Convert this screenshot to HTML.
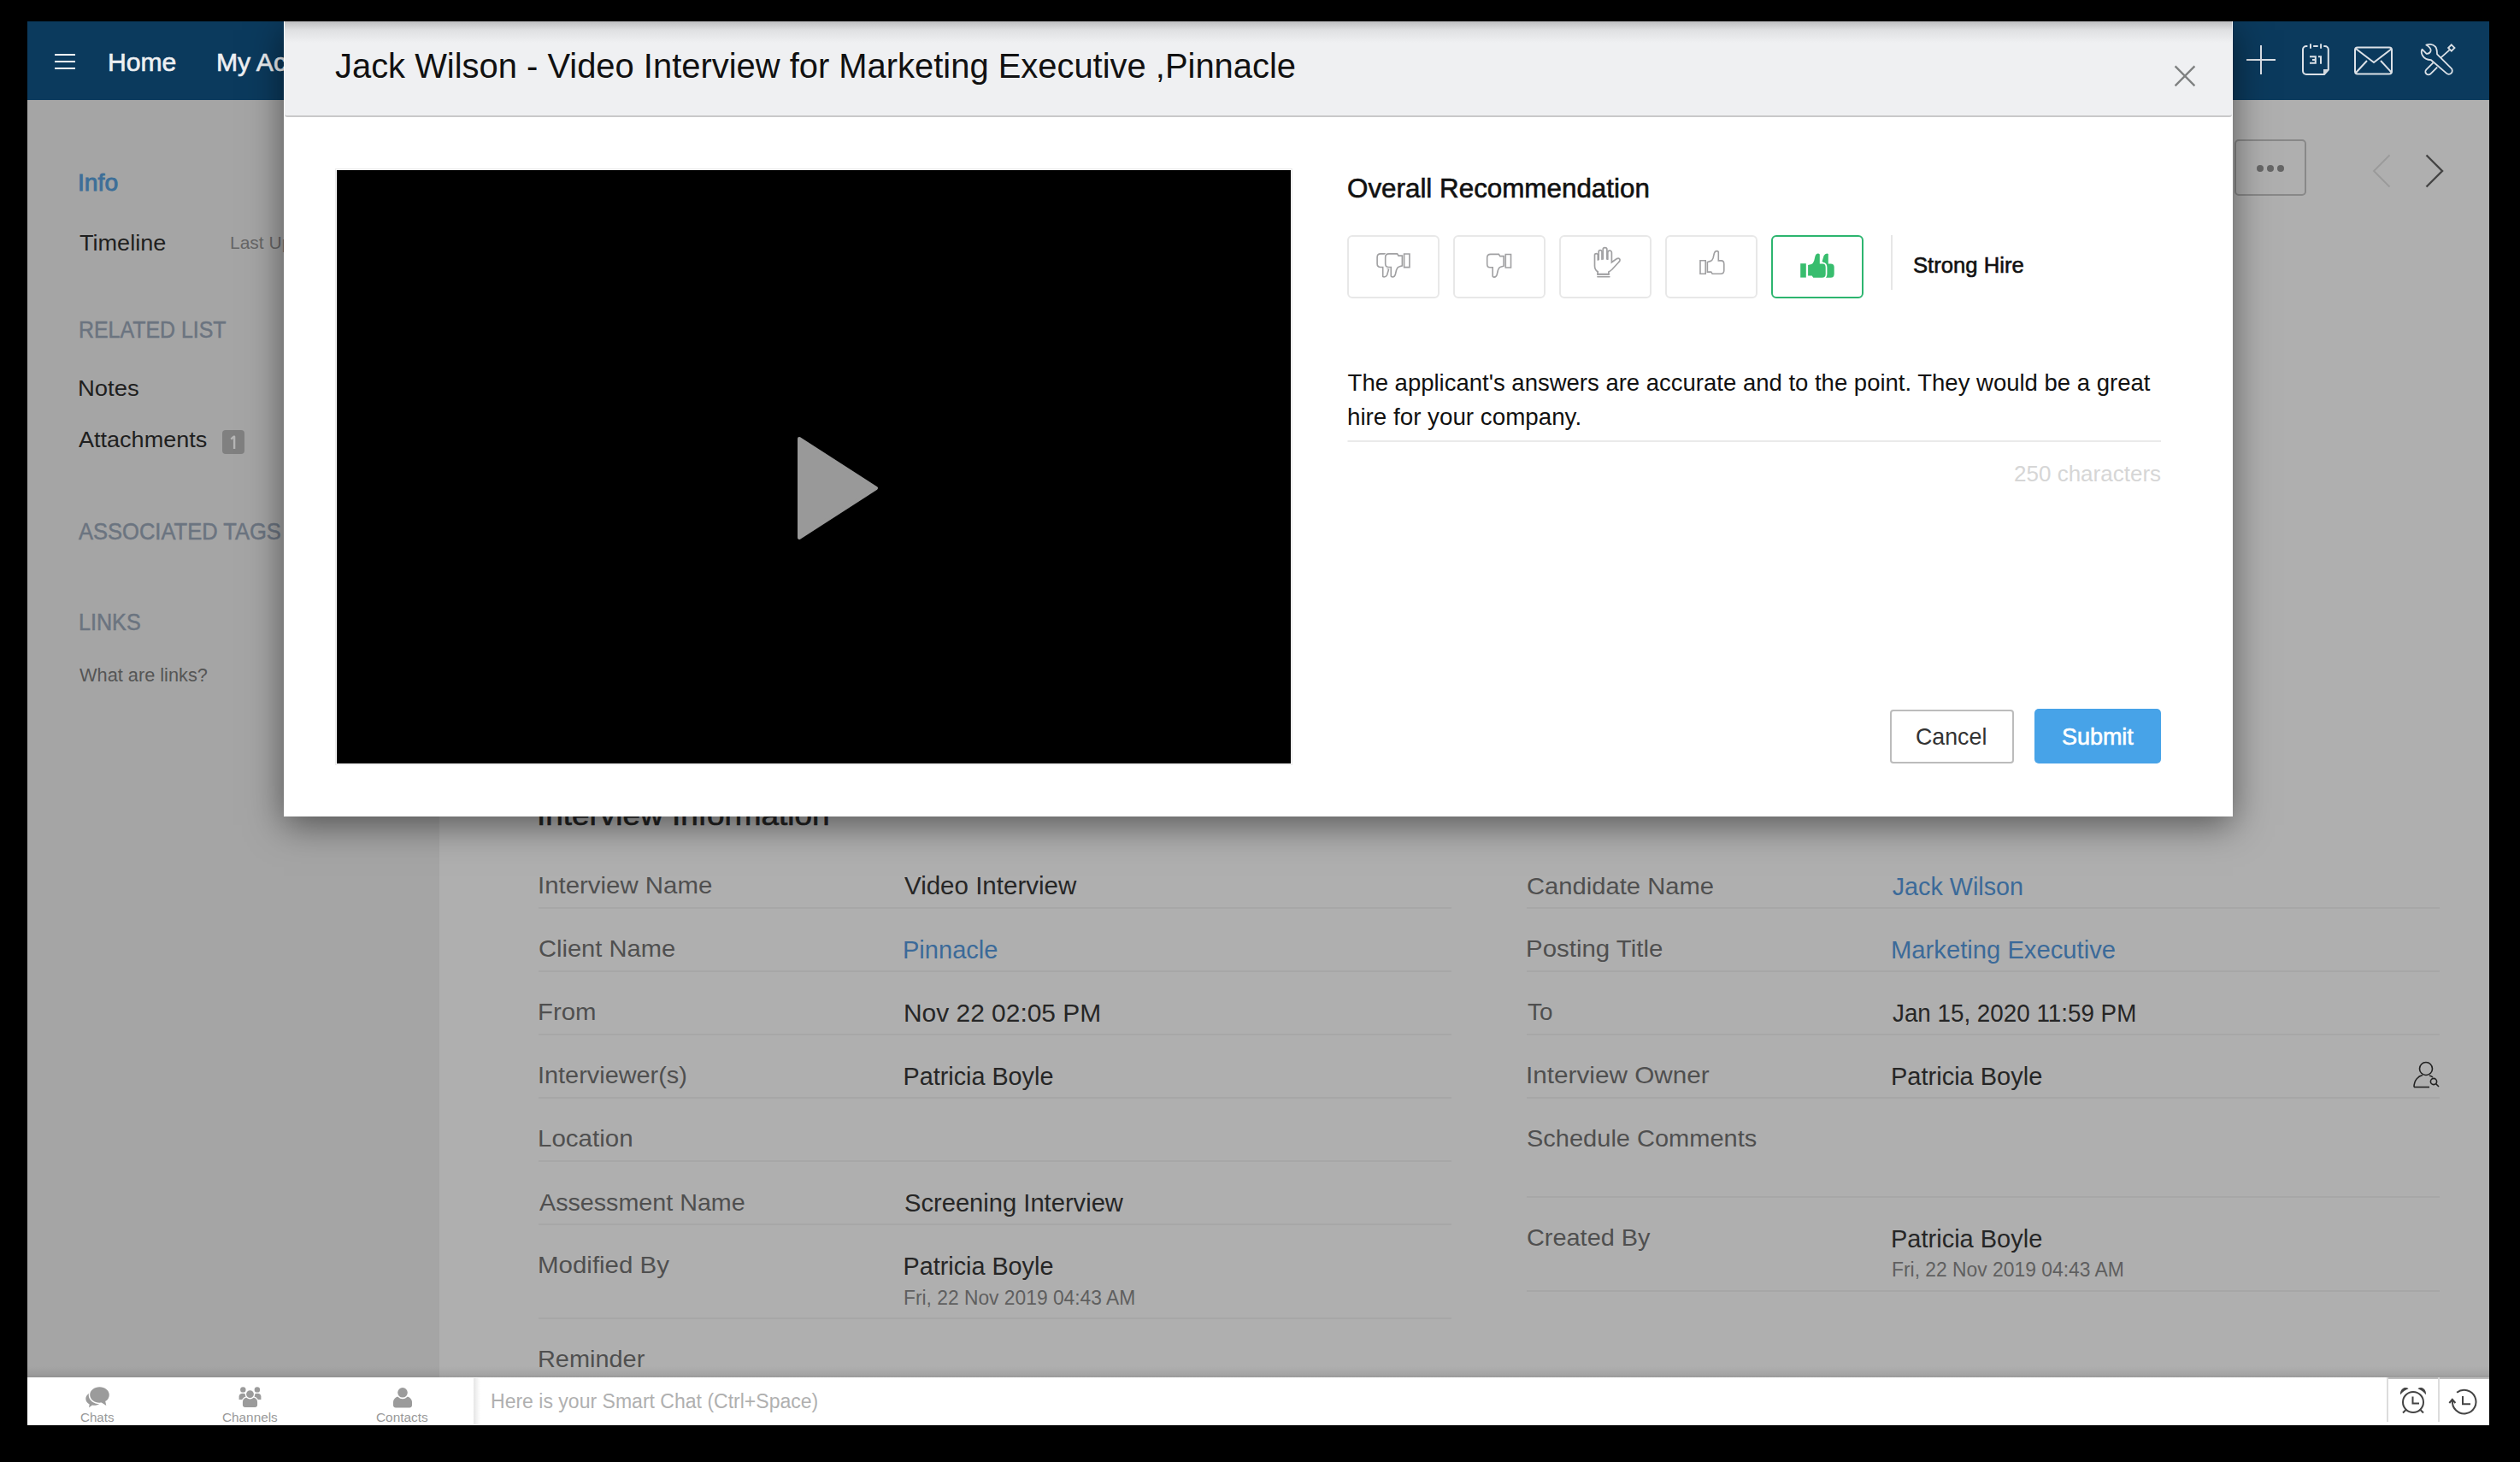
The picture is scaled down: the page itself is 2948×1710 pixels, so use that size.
<!DOCTYPE html>
<html><head><meta charset="utf-8">
<style>
*{box-sizing:border-box;margin:0;padding:0}
html,body{width:2948px;height:1710px;overflow:hidden;background:#000;font-family:"Liberation Sans",sans-serif;position:relative}
.a{position:absolute}
.t{position:absolute;line-height:1;white-space:nowrap;transform-origin:0 0}
.hl{position:absolute;height:2px;background:#a7a7a7}
.rb{position:absolute;top:275px;width:108px;height:74px;border:2px solid #e8e8e8;border-radius:6px;background:#fff}
svg{position:absolute;overflow:visible}
</style></head><body>
<div class="a" style="left:32px;top:25px;width:2880px;height:92px;background:#0b3a5d"></div>
<div class="a" style="left:32px;top:117px;width:482px;height:1494px;background:#a5a5a5"></div>
<div class="a" style="left:514px;top:117px;width:2398px;height:1494px;background:#afafaf"></div>
<div class="a" style="left:32px;top:1598px;width:2880px;height:13px;background:linear-gradient(rgba(0,0,0,0),rgba(0,0,0,0.06) 70%,rgba(0,0,0,0.12))"></div>
<div class="a" style="left:32px;top:1611px;width:2880px;height:56px;background:#fff"></div>
<!-- hamburger -->
<div class="a" style="left:64px;top:63px;width:24px;height:2px;background:#fff"></div>
<div class="a" style="left:64px;top:71px;width:24px;height:2px;background:#fff"></div>
<div class="a" style="left:64px;top:79px;width:24px;height:2px;background:#fff"></div>
<!-- nav icons -->
<svg style="left:0;top:0" width="2948" height="120" viewBox="0 0 2948 120">
 <g fill="none" stroke="#dce1e7" stroke-width="2">
  <path d="M2645 53V87M2628 70H2662"/>
  <path d="M2699.4,54H2698a4,4 0 0 0 -4,4V83a4,4 0 0 0 4,4H2719L2723.8,81.5V58a4,4 0 0 0 -4,-4H2718.3"/>
  <path d="M2703,51.2V56.8M2715.1,51.2V56.8M2706.2,54H2711.7"/>
  <path d="M2702,66.2H2708.8V73.8H2702M2705,70H2708.8M2712,66.2H2715V74.8"/>
  <rect x="2755" y="55.5" width="43" height="31" rx="3"/>
  <path d="M2756 57l21 16 21-16M2756 85l13-14M2798 85l-13-14"/>
  <path d="M2838.3,52.6C2841,51.3 2846,51.5 2849,54.6C2851,57 2851,60 2851,63.3L2867.6,79.9A4,4 0 0 1 2861.9,85.6L2844,70.2C2840,70 2836,68.5 2834,65C2832.3,62 2832.5,59.5 2833.5,57.7L2838.6,62.8C2841,63 2843,61.5 2843.6,59.5C2844,57.5 2843,55.5 2838.3,52.6Z" stroke-width="1.8" stroke-linejoin="round"/>
  <path d="M2867.8,52.3L2871.5,56L2867.8,59.7L2864.1,56Z" stroke-width="1.8"/>
  <path d="M2865.6,58.3L2855.2,67.6" stroke-width="1.8"/>
  <path d="M2846.4,73.4L2838.4,81.4A3.5,3.5 0 0 0 2843.4,86.4L2851.2,78.6" stroke-width="1.8"/>
 </g>
 <path d="M2718,81H2724.5L2719,87.5H2718Z" fill="#d4d9df"/>
</svg>
<!-- more button + arrows -->
<div class="a" style="left:2614px;top:163px;width:84px;height:66px;border:2px solid #888;border-radius:5px"></div>
<svg style="left:0;top:0" width="2948" height="300" viewBox="0 0 2948 300">
 <circle cx="2644" cy="197" r="4" fill="#666"/><circle cx="2656" cy="197" r="4" fill="#666"/><circle cx="2668" cy="197" r="4" fill="#666"/>
 <polyline points="2795.5,181.5 2777,200 2795.5,218.5" fill="none" stroke="#9a9a9a" stroke-width="1.8"/>
 <polyline points="2838.5,181.5 2857,200 2838.5,218.5" fill="none" stroke="#444" stroke-width="2.4"/>
</svg>
<!-- badge -->
<div class="a" style="left:260px;top:503px;width:26px;height:28px;background:#808080;border-radius:4px"></div>
<svg style="left:0;top:0" width="300" height="540" viewBox="0 0 300 540"><path d="M270.3 513.6L273.3 510.8H274.1V524.9" fill="none" stroke="#b6b6b6" stroke-width="2.4" stroke-linejoin="round"/></svg>
<!-- row lines -->
<div class="hl" style="left:630px;top:1061px;width:1068px"></div>
<div class="hl" style="left:630px;top:1135px;width:1068px"></div>
<div class="hl" style="left:630px;top:1209px;width:1068px"></div>
<div class="hl" style="left:630px;top:1283px;width:1068px"></div>
<div class="hl" style="left:630px;top:1357px;width:1068px"></div>
<div class="hl" style="left:630px;top:1431px;width:1068px"></div>
<div class="hl" style="left:630px;top:1541px;width:1068px"></div>
<div class="hl" style="left:1786px;top:1061px;width:1068px"></div>
<div class="hl" style="left:1786px;top:1135px;width:1068px"></div>
<div class="hl" style="left:1786px;top:1209px;width:1068px"></div>
<div class="hl" style="left:1786px;top:1283px;width:1068px"></div>
<div class="hl" style="left:1786px;top:1399px;width:1068px"></div>
<div class="hl" style="left:1786px;top:1509px;width:1068px"></div>
<!-- person search icon -->
<svg style="left:0;top:0" width="2948" height="1300" viewBox="0 0 2948 1300">
 <g fill="none" stroke="#222" stroke-width="1.6">
  <circle cx="2838" cy="1250" r="7.5"/>
  <path d="M2824 1271.5c0-8 5-13 10-14M2842 1258c2 0.5 3 1 4 2"/>
  <path d="M2824 1271.5h18"/>
  <circle cx="2847" cy="1265" r="3.6"/>
  <path d="M2849.5 1267.5l3.5 3.5"/>
 </g>
</svg>
<div class="t" style="left:125.54px;top:59.10px;font-size:29.25px;-webkit-text-stroke:0.6px #eef0f3;color:#eef0f3;transform:scaleX(1.0300);">Home</div>
<div class="t" style="left:253.14px;top:59.10px;font-size:29.25px;-webkit-text-stroke:0.6px #eef0f3;color:#eef0f3;transform:scaleX(1.0300);">My Activities</div>
<div class="t" style="left:91.33px;top:200.00px;font-size:27.25px;-webkit-text-stroke:0.9px #3d6f98;color:#3d6f98;transform:scaleX(1.0370);">Info</div>
<div class="t" style="left:93.00px;top:270.70px;font-size:26.50px;color:#1f1f1f;transform:scaleX(1.0212);">Timeline</div>
<div class="t" style="left:269.00px;top:273.10px;font-size:21.00px;color:#666666;">Last Updated 2 days ago</div>
<div class="t" style="left:91.52px;top:372.30px;font-size:28.00px;-webkit-text-stroke:0.5px #6b7480;color:#6b7480;transform:scaleX(0.8897);">RELATED LIST</div>
<div class="t" style="left:90.91px;top:440.80px;font-size:26.25px;color:#1f1f1f;transform:scaleX(1.0459);">Notes</div>
<div class="t" style="left:92.30px;top:501.10px;font-size:26.50px;color:#1f1f1f;transform:scaleX(1.0201);">Attachments</div>
<div class="t" style="left:92.30px;top:608.10px;font-size:27.25px;-webkit-text-stroke:0.5px #6b7480;color:#6b7480;transform:scaleX(0.9366);">ASSOCIATED TAGS</div>
<div class="t" style="left:91.67px;top:714.00px;font-size:27.50px;-webkit-text-stroke:0.5px #6b7480;color:#6b7480;transform:scaleX(0.9140);">LINKS</div>
<div class="t" style="left:92.80px;top:778.80px;font-size:22.50px;color:#555555;transform:scaleX(0.9667);">What are links?</div>
<div class="t" style="left:628.44px;top:935.90px;font-size:34.00px;-webkit-text-stroke:0.6px #222222;color:#222222;transform:scaleX(1.0857);">Interview Information</div>
<div class="t" style="left:628.82px;top:1021.10px;font-size:28.25px;color:#4f4f4f;transform:scaleX(1.0412);">Interview Name</div>
<div class="t" style="left:629.87px;top:1095.30px;font-size:28.25px;color:#4f4f4f;transform:scaleX(1.0298);">Client Name</div>
<div class="t" style="left:628.82px;top:1169.40px;font-size:28.25px;color:#4f4f4f;transform:scaleX(1.0389);">From</div>
<div class="t" style="left:628.86px;top:1243.10px;font-size:28.25px;color:#4f4f4f;transform:scaleX(1.0221);">Interviewer(s)</div>
<div class="t" style="left:628.81px;top:1317.40px;font-size:28.25px;color:#4f4f4f;transform:scaleX(1.0447);">Location</div>
<div class="t" style="left:630.90px;top:1391.70px;font-size:28.25px;color:#4f4f4f;transform:scaleX(1.0154);">Assessment Name</div>
<div class="t" style="left:628.81px;top:1465.40px;font-size:28.25px;color:#4f4f4f;transform:scaleX(1.0432);">Modified By</div>
<div class="t" style="left:628.85px;top:1574.60px;font-size:28.25px;color:#4f4f4f;transform:scaleX(1.0229);">Reminder</div>
<div class="t" style="left:1058.00px;top:1022.40px;font-size:28.75px;color:#262626;transform:scaleX(1.0266);">Video Interview</div>
<div class="t" style="left:1055.98px;top:1096.60px;font-size:28.75px;color:#3b6a99;transform:scaleX(1.0103);">Pinnacle</div>
<div class="t" style="left:1056.52px;top:1170.90px;font-size:28.75px;color:#262626;transform:scaleX(1.0408);">Nov 22 02:05 PM</div>
<div class="t" style="left:1056.60px;top:1244.60px;font-size:28.75px;color:#262626;">Patricia Boyle</div>
<div class="t" style="left:1057.59px;top:1393.10px;font-size:28.75px;color:#262626;transform:scaleX(1.0134);">Screening Interview</div>
<div class="t" style="left:1056.60px;top:1466.60px;font-size:28.75px;color:#262626;">Patricia Boyle</div>
<div class="t" style="left:1057.03px;top:1506.74px;font-size:23.50px;color:#5f5f5f;transform:scaleX(0.9703);">Fri, 22 Nov 2019 04:43 AM</div>
<div class="t" style="left:1785.97px;top:1021.70px;font-size:28.25px;color:#4f4f4f;transform:scaleX(1.0333);">Candidate Name</div>
<div class="t" style="left:1784.92px;top:1095.40px;font-size:28.25px;color:#4f4f4f;transform:scaleX(1.0423);">Posting Title</div>
<div class="t" style="left:1787.00px;top:1168.90px;font-size:28.25px;color:#4f4f4f;transform:scaleX(0.9854);">To</div>
<div class="t" style="left:1784.90px;top:1243.10px;font-size:28.25px;color:#4f4f4f;transform:scaleX(1.0516);">Interview Owner</div>
<div class="t" style="left:1785.97px;top:1317.40px;font-size:28.25px;color:#4f4f4f;transform:scaleX(1.0268);">Schedule Comments</div>
<div class="t" style="left:1785.98px;top:1433.10px;font-size:28.25px;color:#4f4f4f;transform:scaleX(1.0227);">Created By</div>
<div class="t" style="left:2213.70px;top:1023.10px;font-size:28.75px;color:#3b6a99;">Jack Wilson</div>
<div class="t" style="left:2211.67px;top:1096.90px;font-size:28.75px;color:#3b6a99;transform:scaleX(1.0161);">Marketing Executive</div>
<div class="t" style="left:2213.70px;top:1170.90px;font-size:28.75px;color:#262626;transform:scaleX(0.9665);">Jan 15, 2020 11:59 PM</div>
<div class="t" style="left:2211.68px;top:1244.60px;font-size:28.75px;color:#262626;transform:scaleX(1.0088);">Patricia Boyle</div>
<div class="t" style="left:2211.68px;top:1434.60px;font-size:28.75px;color:#262626;transform:scaleX(1.0088);">Patricia Boyle</div>
<div class="t" style="left:2212.73px;top:1473.94px;font-size:23.50px;color:#5f5f5f;transform:scaleX(0.9725);">Fri, 22 Nov 2019 04:43 AM</div>
<div class="t" style="left:94.00px;top:1650.07px;font-size:15.50px;color:#999999;transform:scaleX(0.9745);">Chats</div>
<div class="t" style="left:260.20px;top:1650.07px;font-size:15.50px;color:#999999;transform:scaleX(0.9888);">Channels</div>
<div class="t" style="left:440.30px;top:1650.07px;font-size:15.50px;color:#999999;transform:scaleX(0.9916);">Contacts</div>
<div class="t" style="left:573.72px;top:1628.04px;font-size:23.50px;color:#b0b0b0;transform:scaleX(0.9799);">Here is your Smart Chat (Ctrl+Space)</div>
<!-- chat bar icons -->
<svg style="left:0;top:0" width="2948" height="1710" viewBox="0 0 2948 1710">
 <g fill="#9b9b9b">
  <path d="M110,1628.2C115.4,1628.2 119.7,1631.7 119.7,1636C119.7,1640.3 115.4,1643.8 110,1643.8C109.3,1643.8 108.6,1643.7 108,1643.6L104,1646.2L104.7,1642.4C102,1641 100.3,1638.7 100.3,1636C100.3,1631.7 104.6,1628.2 110,1628.2Z"/>
  <path d="M116.5,1622.3C122.7,1622.3 127.8,1626.4 127.8,1631.5C127.8,1634.8 126,1637.5 123.2,1639.1L124.3,1644L118.8,1640.6C118,1640.7 117.3,1640.7 116.5,1640.7C110.3,1640.7 105.2,1636.6 105.2,1631.5C105.2,1626.4 110.3,1622.3 116.5,1622.3Z" stroke="#fff" stroke-width="3" style="paint-order:stroke"/>
  <circle cx="284.3" cy="1625.4" r="3.2"/><circle cx="300.9" cy="1625.4" r="3.2"/>
  <path d="M279.6 1637v-3.6c0-2.2 1.6-3.7 4.5-3.7 2.9 0 4.5 1.5 4.5 3.7v3.6z"/>
  <path d="M296.4 1637v-3.6c0-2.2 1.6-3.7 4.5-3.7 2.9 0 4.5 1.5 4.5 3.7v3.6z"/>
  <path d="M283.2 1643v-3.2c0-4 3.6-6.6 9.3-6.6s9.3 2.6 9.3 6.6v3.2c0 2-1.6 3.6-3.6 3.6h-11.4c-2 0-3.6-1.6-3.6-3.6z" stroke="#fff" stroke-width="1.4"/>
  <circle cx="292.5" cy="1630.6" r="5.1" stroke="#fff" stroke-width="1.4"/>
  <path d="M460 1643.5v-3.5c0-4.6 4.5-7.6 11-7.6s11 3 11 7.6v3.5c0 1.7-1.3 3-3 3h-16c-1.7 0-3-1.3-3-3z"/>
  <circle cx="471" cy="1628.8" r="6.6" stroke="#fff" stroke-width="1.6"/>
 </g>
 <defs><linearGradient id="sep" x1="0" x2="1"><stop offset="0" stop-color="#e6e6e6"/><stop offset="1" stop-color="#fff"/></linearGradient></defs>
 <rect x="554" y="1612" width="8" height="54" fill="url(#sep)"/>
 <rect x="2793" y="1611" width="119" height="2" fill="#bdbdbd"/>
 <rect x="2792" y="1611" width="2" height="52" fill="#dcdcdc"/>
 <rect x="2852" y="1611" width="2" height="52" fill="#dcdcdc"/>
 <g fill="none" stroke="#444" stroke-width="2">
  <circle cx="2823" cy="1640" r="12"/>
  <path d="M2822.5 1633.5v8h7.5"/>
  <path d="M2814.5 1649l-3.5 3.5M2831.5 1649l3.5 3.5"/>
  <path d="M2874.1 1628.8A13.8 13.8 0 1 1 2869 1638"/>
  <path d="M2881 1633v9.2h9"/>
  <path d="M2865.3 1641l3.5-4.2 3.6 4.2"/>
 </g>
 <path d="M2808.1,1631.3C2807.5,1627 2810,1623.5 2813.5,1623C2815,1622.8 2816.5,1623.2 2817.6,1624.2C2814,1625.5 2810.5,1628 2808.1,1631.3Z" fill="#444"/>
 <path d="M2837.9,1631.3C2838.5,1627 2836,1623.5 2832.5,1623C2831,1622.8 2829.5,1623.2 2828.4,1624.2C2832,1625.5 2835.5,1628 2837.9,1631.3Z" fill="#444"/>
</svg>
<!-- MODAL -->
<div class="a" style="left:332px;top:25px;width:2280px;height:930px;background:#fff;box-shadow:0 10px 40px rgba(0,0,0,0.5)"></div>
<div class="a" style="left:333px;top:25px;width:2278px;height:112px;border-bottom:2px solid #c9c9ca;border-radius:0 0 3px 3px;background:linear-gradient(#bdbec0 0px,#dfe0e2 10px,#eff0f2 25px,#eff0f2 110px)"></div>
<svg style="left:0;top:0" width="2948" height="960" viewBox="0 0 2948 960">
 <path d="M2544.6 77.4L2567.4 100.4M2567.4 77.4L2544.6 100.4" stroke="#7e8080" stroke-width="2.3" fill="none"/>
 <rect x="392.5" y="197.5" width="1119" height="697" fill="none" stroke="#ececec" stroke-width="1"/>
 <rect x="394" y="199" width="1116" height="694" fill="#000"/>
 <path d="M935 513L1025 571L935 629Z" fill="#999" stroke="#999" stroke-width="4" stroke-linejoin="round"/>
 <rect x="2212" y="275" width="2" height="64" fill="#e6e6e6"/>
 <rect x="1576.5" y="515" width="951.5" height="2" fill="#eaeaea"/>
</svg>
<div class="rb" style="left:1576px"></div>
<div class="rb" style="left:1700px"></div>
<div class="rb" style="left:1824px"></div>
<div class="rb" style="left:1948px"></div>
<div class="rb" style="left:2072px;border-color:#2db56f"></div>
<svg style="left:0;top:0" width="2948" height="400" viewBox="0 0 2948 400">
 <g transform="translate(1630,310.65) rotate(180) translate(-19.95,-14.15) translate(0.85,0.85) scale(0.957)"><g fill="none" stroke="#a0a0a2" stroke-width="1.7"><path d="M25.4,10.1L27.6,2.5Q29,0 31.3,0L32.8,0.6V12H35.6Q39.7,12 39.7,16.1V24.1Q39.7,28.3 35.6,28.3H27V10.1Z"/><path d="M9.1,13.7V26H13.7L15.2,28.3H25.4Q29.7,28.3 29.7,24V16.3Q29.7,12 26.3,12H22.8V1Q22,0 20.8,0Q18.5,0 17.5,3.1L16.2,8.6Q15,12 13.1,12.5Z" fill="#fff" stroke="#fff" stroke-width="3.6"/><path d="M9.1,13.7V26H13.7L15.2,28.3H25.4Q29.7,28.3 29.7,24V16.3Q29.7,12 26.3,12H22.8V1Q22,0 20.8,0Q18.5,0 17.5,3.1L16.2,8.6Q15,12 13.1,12.5Z"/><path d="M0.2,11.8h6.6v16.4h-6.6z"/></g></g>
 <g transform="translate(1753.6,310.8) rotate(180) translate(-14.95,-14.15) translate(0.85,0.85) scale(0.943)"><g fill="none" stroke="#a0a0a2" stroke-width="1.7"><path d="M9.1,13.7V26H13.7L15.2,28.3H25.4Q29.7,28.3 29.7,24V16.3Q29.7,12 26.3,12H22.8V1Q22,0 20.8,0Q18.5,0 17.5,3.1L16.2,8.6Q15,12 13.1,12.5Z"/><path d="M0.2,11.8h6.6v16.4h-6.6z"/></g></g>
 <g transform="translate(2002.9,306.9) translate(-14.95,-14.15) translate(0.85,0.85) scale(0.943)"><g fill="none" stroke="#a0a0a2" stroke-width="1.7"><path d="M9.1,13.7V26H13.7L15.2,28.3H25.4Q29.7,28.3 29.7,24V16.3Q29.7,12 26.3,12H22.8V1Q22,0 20.8,0Q18.5,0 17.5,3.1L16.2,8.6Q15,12 13.1,12.5Z"/><path d="M0.2,11.8h6.6v16.4h-6.6z"/></g></g>
 <g transform="translate(2106,296.4)" fill="#38bd6e">
  <path d="M25.4,10.1L27.6,2.5Q29,0 31.3,0L32.8,0.6V12H35.6Q39.7,12 39.7,16.1V24.1Q39.7,28.3 35.6,28.3H27V10.1Z"/>
  <path d="M9.1,13.7V26H13.7L15.2,28.3H25.4Q29.7,28.3 29.7,24V16.3Q29.7,12 26.3,12H22.8V1Q22,0 20.8,0Q18.5,0 17.5,3.1L16.2,8.6Q15,12 13.1,12.5Z" stroke="#fff" stroke-width="3.4" style="paint-order:stroke"/>
  <path d="M0.2,11.8h6.6v16.4h-6.6z"/>
 </g>
 <g fill="none" stroke="#a0a0a2" stroke-width="1.7" stroke-linecap="round">
  <path d="M1869.1,317.7C1866,316 1865.5,314 1865.5,311V298.5a1.9,1.9 0 0 1 3.8,0V304"/>
  <path d="M1870.2,303.5V294.5a1.9,1.9 0 0 1 3.8,0V303.3"/>
  <path d="M1875.2,303V292a2.35,2.35 0 0 1 4.7,0V303"/>
  <path d="M1880.8,303.2V295.4a2.3,2.3 0 0 1 4.6,0V306.8L1891.5,302.6Q1894,301.5 1895,303.5Q1895.5,305 1893.8,306.5L1886,315Q1884,317 1881.9,318V321"/>
  <path d="M1869.1,317.7V321"/>
  <path d="M1868.8,323.8H1883" stroke-width="1.4"/>
 </g>
 <rect x="1868.3" y="319.7" width="14.4" height="2.2" fill="#a0a0a2"/>
</svg>
<div class="a" style="left:2210.5px;top:829.5px;width:145px;height:63px;border:2px solid #bcbcbc;border-radius:4px;background:#fff"></div>
<div class="a" style="left:2380px;top:829px;width:148px;height:64px;background:#47a3e8;border-radius:5px"></div>
<div class="t" style="left:392.00px;top:56.40px;font-size:41.50px;color:#111111;transform:scaleX(0.9618);">Jack Wilson - Video Interview for Marketing Executive ,Pinnacle</div>
<div class="t" style="left:1576.11px;top:205.30px;font-size:31.75px;-webkit-text-stroke:0.6px #111111;color:#111111;transform:scaleX(0.9877);">Overall Recommendation</div>
<div class="t" style="left:2237.51px;top:297.30px;font-size:26.00px;-webkit-text-stroke:0.6px #111111;color:#111111;transform:scaleX(0.9866);">Strong Hire</div>
<div class="t" style="left:1576.60px;top:434.00px;font-size:27.50px;color:#111111;">The applicant's answers are accurate and to the point. They would be a great</div>
<div class="t" style="left:1575.58px;top:473.80px;font-size:27.25px;color:#111111;transform:scaleX(1.0187);">hire for your company.</div>
<div class="t" style="left:2355.68px;top:541.80px;font-size:25.50px;color:#d6d6d6;transform:scaleX(1.0202);">250 characters</div>
<div class="t" style="left:2241.13px;top:848.30px;font-size:27.50px;color:#333333;transform:scaleX(0.9737);">Cancel</div>
<div class="t" style="left:2411.92px;top:848.30px;font-size:27.50px;-webkit-text-stroke:0.6px #ffffff;color:#ffffff;transform:scaleX(0.9794);">Submit</div>
</body></html>
